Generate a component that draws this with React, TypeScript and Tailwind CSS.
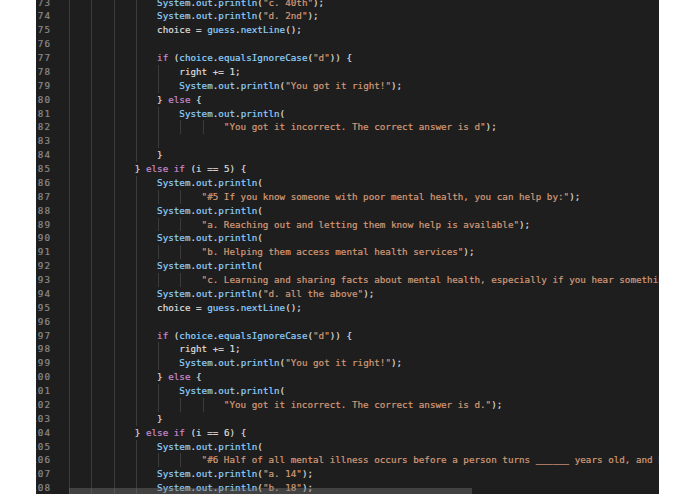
import React from "react";

type Line = { n: number; g: number; code: string };

const lines: Line[] = [
  { n: 73, g: 4, code: '                System.out.println("c. 40th");' },
  { n: 74, g: 4, code: '                System.out.println("d. 2nd");' },
  { n: 75, g: 4, code: "                choice = guess.nextLine();" },
  { n: 76, g: 4, code: "" },
  { n: 77, g: 4, code: '                if (choice.equalsIgnoreCase("d")) {' },
  { n: 78, g: 5, code: "                    right += 1;" },
  { n: 79, g: 5, code: '                    System.out.println("You got it right!");' },
  { n: 80, g: 4, code: "                } else {" },
  { n: 81, g: 5, code: "                    System.out.println(" },
  { n: 82, g: 7, code: '                            "You got it incorrect. The correct answer is d");' },
  { n: 83, g: 5, code: "" },
  { n: 84, g: 4, code: "                }" },
  { n: 85, g: 3, code: "            } else if (i == 5) {" },
  { n: 86, g: 4, code: "                System.out.println(" },
  { n: 87, g: 6, code: '                        "#5 If you know someone with poor mental health, you can help by:");' },
  { n: 88, g: 4, code: "                System.out.println(" },
  { n: 89, g: 6, code: '                        "a. Reaching out and letting them know help is available");' },
  { n: 90, g: 4, code: "                System.out.println(" },
  { n: 91, g: 6, code: '                        "b. Helping them access mental health services");' },
  { n: 92, g: 4, code: "                System.out.println(" },
  { n: 93, g: 6, code: '                        "c. Learning and sharing facts about mental health, especially if you hear something");' },
  { n: 94, g: 4, code: '                System.out.println("d. all the above");' },
  { n: 95, g: 4, code: "                choice = guess.nextLine();" },
  { n: 96, g: 4, code: "" },
  { n: 97, g: 4, code: '                if (choice.equalsIgnoreCase("d")) {' },
  { n: 98, g: 5, code: "                    right += 1;" },
  { n: 99, g: 5, code: '                    System.out.println("You got it right!");' },
  { n: 100, g: 4, code: "                } else {" },
  { n: 101, g: 5, code: "                    System.out.println(" },
  { n: 102, g: 7, code: '                            "You got it incorrect. The correct answer is d.");' },
  { n: 103, g: 4, code: "                }" },
  { n: 104, g: 3, code: "            } else if (i == 6) {" },
  { n: 105, g: 4, code: "                System.out.println(" },
  { n: 106, g: 6, code: '                        "#6 Half of all mental illness occurs before a person turns ______ years old, and by age 24");' },
  { n: 107, g: 4, code: '                System.out.println("a. 14");' },
  { n: 108, g: 4, code: '                System.out.println("b. 18");' },
];

const KEYWORDS = ["if", "else"];

// tiny tokenizer, good enough for these lines
function tokenize(src: string) {
  const out: { t: string; c: string }[] = [];
  let i = 0;
  while (i < src.length) {
    const ch = src[i];
    if (ch === '"') {
      let j = i + 1;
      while (j < src.length && src[j] !== '"') j++;
      out.push({ t: src.slice(i, j + 1), c: "text-[#d39a78]" });
      i = j + 1;
    } else if (/[A-Za-z_]/.test(ch)) {
      let j = i;
      while (j < src.length && /[A-Za-z0-9_]/.test(src[j])) j++;
      const word = src.slice(i, j);
      const next = src[j];
      let c = "text-[#dcdcdc]";
      if (KEYWORDS.includes(word)) c = "text-[#c98ad0]";
      else if (next === "." || next === "(") c = "text-[#8fd0fb]";
      out.push({ t: word, c });
      i = j;
    } else {
      let j = i;
      while (j < src.length && !/[A-Za-z_"]/.test(src[j])) j++;
      out.push({ t: src.slice(i, j), c: "text-[#dcdcdc]" });
      i = j;
    }
  }
  return out;
}

const CodeLine: React.FC<{ line: Line }> = ({ line }) => {
  const rest = line.code.slice(line.g * 4);
  return (
    <div className="flex h-[13.88px] items-stretch">
      <div className="w-[32px] shrink-0 flex justify-end pr-[17px] text-[#8a8a8a] tracking-[1px]">
        <span>{line.n}</span>
      </div>
      {Array.from({ length: line.g }).map((_, k) => (
        <span
          key={k}
          className="w-[4ch] shrink-0 bg-[linear-gradient(to_right,transparent_1px,#3b3b3b_1px,#3b3b3b_2px,transparent_2px)]"
        />
      ))}
      <span className="whitespace-pre">
        {tokenize(rest).map((tok, k) => (
          <span key={k} className={tok.c}>
            {tok.t}
          </span>
        ))}
      </span>
    </div>
  );
};

export default function App() {
  return (
    <div className="w-[695px] h-[494px] bg-white flex">
      <div className="relative ml-[36px] w-[623px] h-full bg-[#1e1e1e] overflow-hidden">
        <div className="-mt-[4.5px] font-['DejaVu_Sans_Mono',monospace] text-[9.25px] leading-[13.88px] [-webkit-text-stroke:0.2px]">
          {lines.map((l) => (
            <CodeLine key={l.n} line={l} />
          ))}
        </div>
        {/* horizontal scrollbar thumb */}
        <div className="absolute left-[33px] top-[488px] w-[403px] h-[10px] bg-[#797979]/40" />
      </div>
    </div>
  );
}
